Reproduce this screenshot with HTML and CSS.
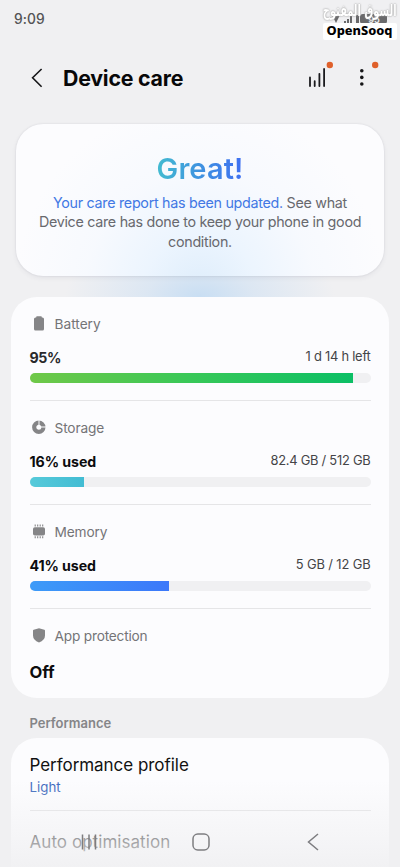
FILE: index.html
```html
<!DOCTYPE html>
<html lang="en">
<head>
<meta charset="utf-8">
<meta name="viewport" content="width=device-width">
<title>Device care</title>
<link rel="stylesheet" href="styles.css">
</head>
<body>
<div class="phone">
  <header class="status">
    <span class="clock">9:09</span>
    <svg class="signals" width="58" height="12" viewBox="0 0 58 12" fill="#69696b">
      <path d="M2 2h8l-4 8zM14 8h2v3h-2zM17 6h2v5h-2zM20 3h2v8h-2zM26 2h3v9h-3z"/>
      <rect x="30" y="1" width="27" height="10" rx="3"/>
      <text class="charge" x="44" y="9.500">95</text>
    </svg>
  </header>
  <div class="watermark">
    <span class="mark-ar" lang="ar" dir="rtl">السوق المفتوح</span>
    <span class="mark-en"><span>OpenSooq</span></span>
  </div>
  <div class="toolbar">
    <svg class="back" width="12" height="20" viewBox="0 0 12 20" fill="none" stroke="#161618" stroke-width="1.6"><path d="M10.6 1 1.6 9.8l9 9"/></svg>
    <h1 class="title">Device care</h1>
    <svg class="chart" width="30" height="30" viewBox="0 0 30 30"><path d="M4 17.5v8.5M8.7 21.2v4.8M13.4 13.8v12.2M18.1 9v17" stroke="#1b1b1e" stroke-width="1.8" fill="none" stroke-linecap="round"/><circle cx="23.8" cy="5" r="3.2" fill="#df602b"/></svg>
    <svg class="more" width="30" height="30" viewBox="0 0 30 30"><g fill="#161618"><circle cx="11.8" cy="10.8" r="1.8"/><circle cx="11.8" cy="17.4" r="1.8"/><circle cx="11.8" cy="24" r="1.8"/></g><circle cx="25.2" cy="5" r="3.2" fill="#df602b"/></svg>
  </div>
  <section class="hero">
    <div class="report">
      <h2 class="great">Great!</h2>
      <p class="summary"><span class="line"><a>Your care report has been updated.</a> See what</span><span class="line">Device care has done to keep your phone in good</span><span class="line">condition.</span></p>
    </div>
  </section>
  <main class="card stats">
    <section class="row">
      <div class="label"><svg width="18" height="18" viewBox="0 0 18 18" fill="#858587"><path d="M6.200 2.100V2.500H5.500Q4 2.500 4 4V14Q4 15.500 5.500 15.500H12.500Q14 15.500 14 14V4Q14 2.500 12.500 2.500h-.7v-.4Q11.800 1.300 11 1.300H7Q6.200 1.300 6.200 2.100z"/></svg><span>Battery</span></div>
      <div class="values"><b class="v-battery">95%</b><span class="r-battery">1 d 14 h left</span></div>
      <div class="track"><div class="fill green" style="width:95%"></div></div>
    </section>
    <section class="row">
      <div class="label"><svg width="18" height="18" viewBox="0 0 18 18"><circle cx="8.800" cy="8.200" r="4.600" fill="none" stroke="#858587" stroke-width="4.200"/><path d="M9 .8v7.200h7" fill="none" stroke="#fcfcfe" stroke-width="1"/></svg><span class="n-storage">Storage</span></div>
      <div class="values"><b>16% used</b><span class="r-storage">82.4 GB / 512 GB</span></div>
      <div class="track"><div class="fill teal" style="width:16%"></div></div>
    </section>
    <section class="row">
      <div class="label"><svg width="18" height="18" viewBox="0 0 18 18"><rect x="3" y="4.200" width="12" height="8.400" rx="1.800" fill="#858587"/><path d="M5.200 1.600v2M7.700 1.600v2M10.200 1.600v2M12.700 1.600v2M5.200 13.200v2M7.700 13.200v2M10.200 13.200v2M12.700 13.200v2" stroke="#858587" stroke-width="1.100"/></svg><span class="n-memory">Memory</span></div>
      <div class="values"><b>41% used</b><span class="r-memory">5 GB / 12 GB</span></div>
      <div class="track"><div class="fill blue" style="width:41%"></div></div>
    </section>
    <section class="row last">
      <div class="label"><svg width="18" height="18" viewBox="0 0 18 18" fill="#858587"><path d="M9 1.200 14.300 2.800Q15 3 15 3.800V8.600Q15 13.200 9 15.600Q3 13.200 3 8.600V3.800Q3 3 3.700 2.800z"/></svg><span class="n-app">App protection</span></div>
      <div class="values"><b class="off">Off</b></div>
    </section>
  </main>
  <h3 class="group"><span>Performance</span></h3>
  <section class="card perf">
    <div class="item"><span class="item-title">Performance profile</span><span class="item-sub">Light</span></div>
    <div class="item second"><span class="item-auto">Auto optimisation</span></div>
  </section>
  <nav class="navbar">
    <svg width="18" height="18" viewBox="0 0 18 18" stroke="#7d7d80" stroke-width="1.500"><path d="M2.500 1.500v15M9 1.500v15M15.500 1.500v15"/></svg>
    <svg width="18" height="18" viewBox="0 0 18 18" fill="none" stroke="#7d7d80" stroke-width="1.500"><rect x="1" y="1" width="16" height="16" rx="4.800"/></svg>
    <svg width="18" height="18" viewBox="0 0 18 18" fill="none" stroke="#7d7d80" stroke-width="1.500"><path d="M14 1 4.500 9l9.500 8"/></svg>
  </nav>
</div>
</body>
</html>
```
FILE: styles.css
```css
* { box-sizing: border-box; margin: 0; padding: 0; }
body { background: #f0f0f2; font-family: Inter, "Noto Sans", sans-serif; color: #111; }
svg { display: block; flex: none; }
span, b { white-space: nowrap; }
.phone { position: relative; width: 400px; height: 867px; overflow: hidden; display: flex; flex-direction: column; }
.status { height: 38px; flex: none; display: flex; justify-content: space-between; align-items: center; padding: 0 12px 0 14px; }
.clock { font-size: 13.8px; font-weight: 500; color: #545456; letter-spacing: .1px; }
.charge { font-size: 9px; font-weight: 700; fill: #ededed; text-anchor: middle; }
.watermark { position: absolute; top: 0; right: 3px; width: 75px; display: flex; flex-direction: column; align-items: center; }
.mark-ar { height: 23px; line-height: 22px; font-family: "DejaVu Sans", sans-serif; font-weight: 700; font-size: 12.5px; transform: scale(.79, 1.3); color: #fff; text-shadow: 0 0 2px #999, 0 0 1px #aaa; }
.mark-en { width: 74px; height: 17px; line-height: 15px; background: #fff; border-radius: 2px; text-align: center; font-family: "Noto Sans", sans-serif; font-weight: 800; font-size: 12.8px; color: #000; }
.toolbar { height: 85px; flex: none; display: flex; align-items: flex-start; padding: 20px 0 0 31px; }
.back { margin-top: 10px; }
.title { margin-left: 20px; width: 220px; margin-top: 7px; font-size: 21.3px; line-height: 26px; font-weight: 700; letter-spacing: -.2px; white-space: nowrap; color: #080809; }
.chart { margin-left: 23px; margin-top: 2px; }
.more { margin-left: 14px; margin-top: 2px; }
.hero { height: 174px; flex: none; padding: 1px 16px 0; background: radial-gradient(ellipse 135px 70px at 50% 100%, #c8def3 0%, rgba(212,227,243,.7) 40%, rgba(240,240,242,0) 100%); }
.report { height: 152px; border-radius: 27px; padding-top: 27px; text-align: center; background: radial-gradient(ellipse 185px 190px at 50% 110%, #deedfb 0%, rgba(232,243,254,.8) 30%, rgba(242,247,254,.5) 62%, rgba(252,252,254,0) 100%) #fcfcfe; box-shadow: 0 0 2px rgba(60,60,80,.12), 0 2px 5px rgba(60,60,80,.07); }
.great { display: block; width: 88px; margin: 0 auto; font-size: 29px; line-height: 35px; font-weight: 600; background: linear-gradient(90deg, #43bcd0, #3e92e0 50%, #3f6ff2); -webkit-background-clip: text; background-clip: text; color: transparent; letter-spacing: .1px; }
.summary { margin-top: 7px; color: #68696e; font-size: 14.3px; line-height: 19.3px; letter-spacing: -.29px; }
.summary a { color: #4278e4; }
.line { display: block; }
.card { flex: none; margin: 0 11px; background: #fcfcfe; border-radius: 26px; }
.stats { height: 401px; padding: 0 18.500px; }
.row { height: 104px; padding-top: 17px; border-bottom: 1px solid #e5e5e7; }
.row.last { border: 0; }
.label { height: 20px; display: flex; align-items: center; gap: 7px; font-size: 13.7px; color: #747477; }
.n-storage { letter-spacing: -.15px; }
.n-memory { letter-spacing: -.15px; }
.n-app { letter-spacing: -.2px; }
.values { display: flex; justify-content: space-between; margin-top: 13px; height: 22px; line-height: 22px; font-size: 14.2px; color: #0c0c0e; }
.values b { font-weight: 700; letter-spacing: -.08px; }
.values span { font-size: 12.9px; line-height: 20px; color: #444447; }
.values .r-battery { letter-spacing: -.23px; }
.values .r-storage { letter-spacing: -.25px; }
.values .r-memory { letter-spacing: -.13px; }
.values .v-battery { color: #29292b; letter-spacing: -.4px; }
.values .off { font-size: 16.600px; line-height: 26px; }
.track { height: 10px; margin-top: 4px; border-radius: 5px; overflow: hidden; background: #f0f0f2; }
.fill { height: 100%; }
.green { background: linear-gradient(90deg, #70c848, #38c858 50%, #0bbf65); }
.teal { background: linear-gradient(90deg, #56cada, #42bcd3); }
.blue { background: linear-gradient(90deg, #3d9bf8, #3c78fa); }
.group { height: 40px; flex: none; padding: 15px 0 0 29.500px; font-size: 13px; line-height: 20px; font-weight: 600; color: #858588; }
.perf { height: 145px; padding: 0 18.500px; border-radius: 26px 26px 0 0; }
.item { height: 73px; display: flex; flex-direction: column; border-bottom: 1px solid #e3e3e5; padding-top: 16px; }
.item-title, .item-auto { font-size: 17px; line-height: 23px; letter-spacing: -.04px; }
.item-sub { font-size: 13.3px; line-height: 20px; color: #3c69bd; }
.item.second { border: 0; padding-top: 20px; }
.item-auto { color: #29292b; letter-spacing: .05px; }
.navbar { position: absolute; left: 0; right: 0; bottom: 0; height: 87px; padding: 53px 78px 0 80px; display: flex; justify-content: space-between; background: linear-gradient(180deg, rgba(240,240,242,0), rgba(240,240,242,.35) 40%, rgba(240,240,242,.65) 75%, rgba(240,240,242,.9) 100%); }
```
